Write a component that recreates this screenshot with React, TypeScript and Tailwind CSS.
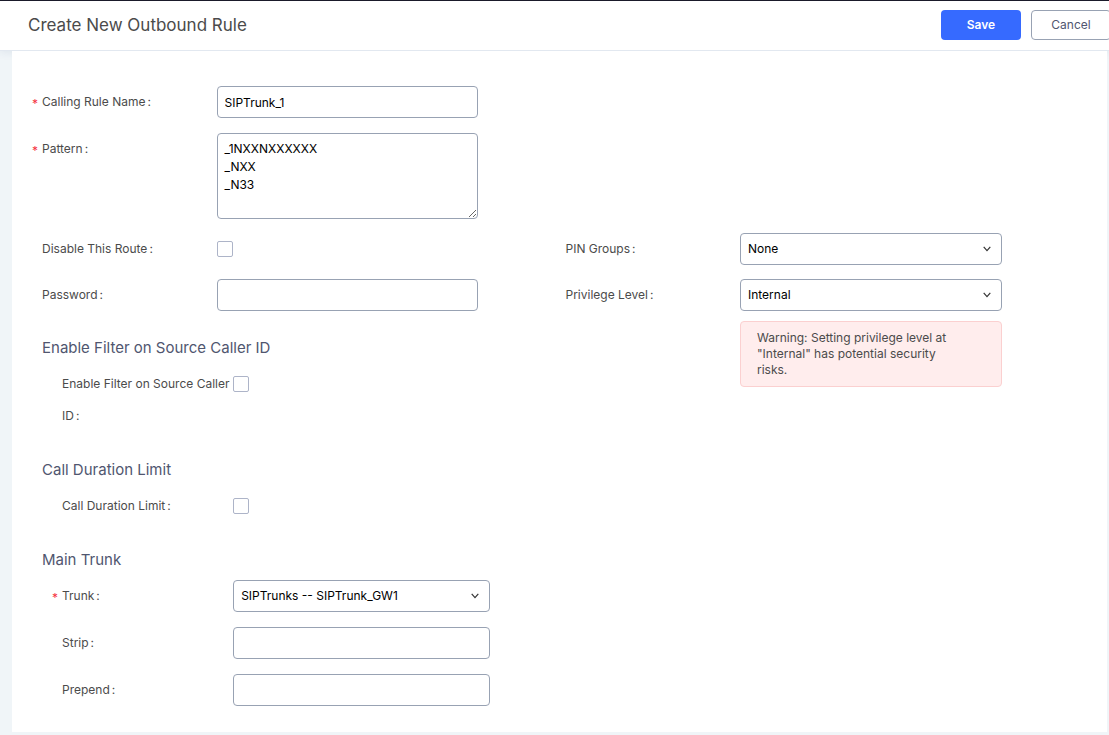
import React, { useState } from 'react';

const inputClass =
  'block w-full h-8 rounded border border-[#98a2b3] bg-white px-[7px] text-xs text-black outline-none focus:border-[#366aff]';

interface FieldProps {
  id: string;
  label: string;
  required?: boolean;
  className?: string;
  children: React.ReactNode;
}

function Field({ id, label, required, className = '', children }: FieldProps) {
  return (
    <div className={`flex items-start ${className}`}>
      <label htmlFor={id} className="relative w-1/3 shrink-0 text-xs leading-8 text-[#4b4b4b]">
        {required && (
          <span className="absolute -left-[10px] top-0.5 text-[#f5333f]">*</span>
        )}
        {label}
        <span className="ml-0.5">:</span>
      </label>
      <div className="w-1/2">{children}</div>
    </div>
  );
}

interface SelectProps {
  id: string;
  value: string;
  options: string[];
  onChange: (value: string) => void;
}

function Select({ id, value, options, onChange }: SelectProps) {
  return (
    <div className="relative">
      <select
        id={id}
        value={value}
        onChange={(e) => onChange(e.target.value)}
        className={`${inputClass} appearance-none pr-8`}
      >
        {options.map((option) => (
          <option key={option}>{option}</option>
        ))}
      </select>
      <svg
        viewBox="0 0 8 6"
        className="pointer-events-none absolute right-[11px] top-[13px] h-1.5 w-2"
        fill="none"
        stroke="#333"
        strokeWidth="1.2"
      >
        <path d="M0.7 0.9 L4 4.6 L7.3 0.9" />
      </svg>
    </div>
  );
}

function Checkbox({ id }: { id: string }) {
  return (
    <div className="flex h-8 items-center">
      <input
        id={id}
        type="checkbox"
        className="h-4 w-4 appearance-none rounded-xs border border-[#adb4c8] bg-white checked:bg-[#366aff]"
      />
    </div>
  );
}

function Section({ title, children }: { title: string; children: React.ReactNode }) {
  return (
    <section className="mb-[26px]">
      <h2 className="mb-2 text-[15px] leading-6 text-[#50566f]">{title}</h2>
      <div className="-mr-[10px] flex flex-col gap-[15px] pl-5">{children}</div>
    </section>
  );
}

export default function App() {
  const [name, setName] = useState('SIPTrunk_1');
  const [pattern, setPattern] = useState('_1NXXNXXXXXX\n_NXX\n_N33');
  const [pinGroup, setPinGroup] = useState('None');
  const [privilege, setPrivilege] = useState('Internal');
  const [trunk, setTrunk] = useState('SIPTrunks -- SIPTrunk_GW1');

  return (
    <div className="min-h-screen overflow-hidden bg-[#f0f5f8] font-['Inter','Liberation_Sans',sans-serif]">
      <header className="flex h-[51px] items-center justify-between border-b border-t border-b-[#e2e8f0] border-t-[#1a1a2a] bg-white pb-0.5 pl-7 shadow-[0_2px_8px_rgba(40,60,110,0.08)]">
        <h1 className="pt-[3px] text-[17px] text-[#4b4b4b]">Create New Outbound Rule</h1>
        <div className="-mr-0.5 flex gap-[10px]">
          <button
            type="submit"
            form="outbound-rule"
            className="h-[30px] w-20 rounded bg-[#366aff] text-xs font-semibold text-white"
          >
            Save
          </button>
          <button
            type="button"
            className="h-[30px] w-20 rounded border border-[#98a2b3] bg-white text-xs text-[#50566f]"
          >
            Cancel
          </button>
        </div>
      </header>

      <form
        id="outbound-rule"
        onSubmit={(e) => e.preventDefault()}
        className="relative mb-[3px] ml-3 mr-0.5 grid grid-cols-2 bg-white pl-[30px] pr-[18px] pt-[35px]"
      >
        {/* Rule name and dial patterns */}
        <div className="col-start-1">
          <Field id="rule-name" label="Calling Rule Name" required className="mb-[15px]">
            <input
              id="rule-name"
              type="text"
              value={name}
              onChange={(e) => setName(e.target.value)}
              className={inputClass}
            />
          </Field>
          <Field id="pattern" label="Pattern" required className="mb-[14px]">
            <textarea
              id="pattern"
              value={pattern}
              onChange={(e) => setPattern(e.target.value)}
              className="block h-[86px] w-full resize rounded border border-[#98a2b3] bg-white px-[7px] py-[6px] text-xs leading-[18px] text-black outline-none"
            />
          </Field>
        </div>

        <div className="col-start-1 row-start-2">
          <div className="mb-[25px] flex flex-col gap-[14px]">
            <Field id="disable-route" label="Disable This Route">
              <Checkbox id="disable-route" />
            </Field>
            <Field id="password" label="Password">
              <input id="password" type="text" className={inputClass} />
            </Field>
          </div>

          <Section title="Enable Filter on Source Caller ID">
            <Field id="caller-filter" label="Enable Filter on Source Caller ID">
              <Checkbox id="caller-filter" />
            </Field>
          </Section>

          <Section title="Call Duration Limit">
            <Field id="duration-limit" label="Call Duration Limit">
              <Checkbox id="duration-limit" />
            </Field>
          </Section>

          <Section title="Main Trunk">
            <Field id="trunk" label="Trunk" required>
              <Select
                id="trunk"
                value={trunk}
                options={['SIPTrunks -- SIPTrunk_GW1']}
                onChange={setTrunk}
              />
            </Field>
            <Field id="strip" label="Strip">
              <input id="strip" type="text" className={inputClass} />
            </Field>
            <Field id="prepend" label="Prepend">
              <input id="prepend" type="text" className={inputClass} />
            </Field>
          </Section>
        </div>

        {/* Permissions */}
        <div className="col-start-2 row-start-2">
          <Field id="pin-groups" label="PIN Groups" className="mb-[14px]">
            <Select id="pin-groups" value={pinGroup} options={['None']} onChange={setPinGroup} />
          </Field>
          <Field id="privilege" label="Privilege Level">
            <Select
              id="privilege"
              value={privilege}
              options={['Internal', 'Local', 'National', 'International']}
              onChange={setPrivilege}
            />
            <div
              role="alert"
              className="mt-[10px] rounded border border-[#fbd0d0] bg-[#ffeded] py-2 pl-4 pr-12 text-xs leading-4 text-[#4b4b4b]"
            >
              Warning: Setting privilege level at "Internal" has potential security risks.
            </div>
          </Field>
        </div>
      </form>
    </div>
  );
}
